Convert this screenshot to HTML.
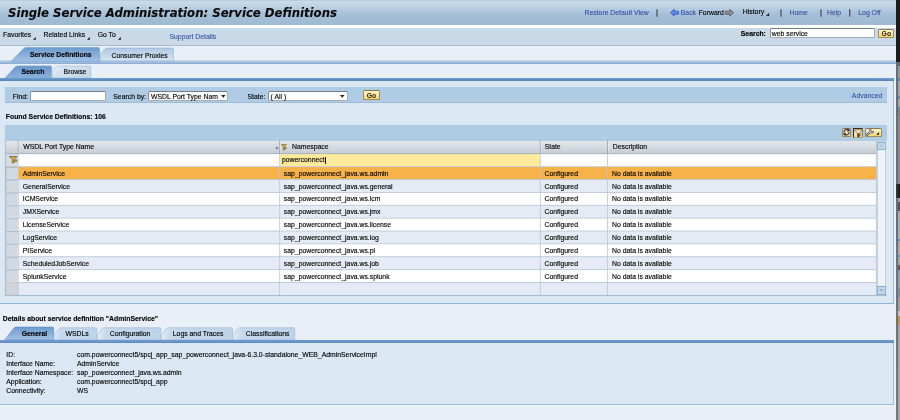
<!DOCTYPE html><html><head><meta charset="utf-8"><title>Single Service Administration: Service Definitions</title><style>
html,body{margin:0;padding:0}
body{width:900px;height:420px;overflow:hidden;position:relative;background:#e8eff6;font-family:"Liberation Sans",Arial,sans-serif;font-size:6.85px;color:#111}
div,span,a{position:absolute;display:block;box-sizing:border-box}
.t{white-space:nowrap;line-height:1;color:#000;-webkit-text-stroke:0.13px currentColor}
.b{font-weight:bold}
.lnk{color:#2a4a9e;-webkit-text-stroke:0.06px currentColor}
a{text-decoration:none}
svg{position:absolute;overflow:visible}
.hdr{background:linear-gradient(#b6c4d2 0,#c9dcec 1.6px,#b7cde1 8px,#a5bed7 15px,#a0bad4 100%)}
.menu{background:#c9d9e7;border-bottom:1px solid #a9bccf}
.tabA{background:linear-gradient(#6f9dd0,#9dbde2)}
.tabI{background:linear-gradient(#eef4fa,#c3d6ea)}
.blueline{background:linear-gradient(#5a86ba,#86abd6)}
.inp{background:#fff;border:0.7px solid #a4aebb;border-top-color:#747c86;border-left-color:#8a929c;border-radius:1.2px}
.btn{background:linear-gradient(#fdf3c6,#fbe79c 55%,#f4d66c);border:0.7px solid #9a8c5c;border-top-color:#857a54;border-radius:1.6px}
.ghead{background:linear-gradient(#e3e7ec,#c6ccd5)}
.sel{background:#d2d8e0;border:0.7px solid #a0afc4;border-right-color:#c2cad6;border-bottom-color:#e6ebf1}
</style></head><body><div id="root" style="left:0;top:0;width:900px;height:420px;overflow:hidden;will-change:transform">
<div class="hdr" style="left:0.00px;top:0.00px;width:896.20px;height:24.80px;"></div>
<div style="left:0.00px;top:24.80px;width:896.20px;height:3.20px;background:#fff"></div>
<span class="t title" style="left:8.00px;top:8.00px;font-size:11.7px;font-family:&quot;DejaVu Sans&quot;,Verdana,sans-serif;font-weight:bold;font-style:italic;color:#0a0a0a;">Single Service Administration: Service Definitions</span>
<a class="t lnk" style="left:584.50px;top:10.00px;">Restore Default View</a>
<svg style="left:669.8px;top:9.2px" width="9" height="7.4" viewBox="0 0 9 7.4"><path d="M4.2 0.3 L0.4 3.7 L4.2 7.1 L4.2 5.2 L8.6 5.2 L8.6 2.2 L4.2 2.2 Z" fill="#5686ee" stroke="#2444a8" stroke-width="0.6" stroke-linejoin="round"/></svg>
<a class="t lnk" style="left:680.80px;top:10.00px;">Back</a>
<span class="t" style="left:698.70px;top:10.00px;">Forward</span>
<svg style="left:725px;top:9.2px" width="9" height="7.4" viewBox="0 0 9 7.4"><path d="M4.8 0.3 L8.6 3.7 L4.8 7.1 L4.8 5.2 L0.4 5.2 L0.4 2.2 L4.8 2.2 Z" fill="#909090" stroke="#484848" stroke-width="0.7" stroke-linejoin="round"/></svg>
<span class="t" style="left:742.80px;top:9.00px;">History</span>
<svg style="left:765.9px;top:12.7px" width="3.1" height="3.1" viewBox="0 0 3 3"><path d="M3 0 L3 3 L0 3 Z" fill="#1a1a3a"/></svg>
<a class="t lnk" style="left:789.60px;top:10.00px;">Home</a>
<a class="t lnk" style="left:827.00px;top:10.00px;">Help</a>
<a class="t lnk" style="left:858.30px;top:10.00px;">Log Off</a>
<svg style="left:0;top:0" width="900" height="30" viewBox="0 0 900 30"><rect x="656.35" y="9.2" width="1.3" height="7.5" fill="#4c5662"/><rect x="780.35" y="9.2" width="1.3" height="7.5" fill="#4c5662"/><rect x="820.35" y="9.2" width="1.3" height="7.5" fill="#4c5662"/><rect x="849.05" y="9.2" width="1.3" height="7.5" fill="#4c5662"/></svg>
<div class="menu" style="left:0.00px;top:28.00px;width:896.20px;height:17.80px;"></div>
<span class="t" style="left:3.00px;top:32.00px;">Favorites</span>
<svg style="left:33.2px;top:36.9px" width="2.8" height="2.8" viewBox="0 0 3 3"><path d="M3 0 L3 3 L0 3 Z" fill="#111"/></svg>
<span class="t" style="left:43.60px;top:32.00px;">Related Links</span>
<svg style="left:87.4px;top:36.9px" width="2.8" height="2.8" viewBox="0 0 3 3"><path d="M3 0 L3 3 L0 3 Z" fill="#111"/></svg>
<span class="t" style="left:97.70px;top:32.00px;">Go To</span>
<svg style="left:118.4px;top:36.9px" width="2.8" height="2.8" viewBox="0 0 3 3"><path d="M3 0 L3 3 L0 3 Z" fill="#111"/></svg>
<a class="t lnk" style="left:169.50px;top:34.00px;">Support Details</a>
<span class="t b" style="left:740.80px;top:31.00px;">Search:</span>
<div class="inp" style="left:769.50px;top:28.40px;width:105.20px;height:9.40px;"></div>
<span class="t" style="left:771.80px;top:31.00px;">web service</span>
<div class="btn" style="left:878.20px;top:28.50px;width:16.20px;height:9.00px;"></div>
<span class="t b" style="left:881.60px;top:31.00px;color:#2c2612;-webkit-text-stroke:0">Go</span>
<div style="left:0.00px;top:45.80px;width:896.20px;height:15.60px;background:#e8eff6"></div>
<div style="left:0.00px;top:63.80px;width:896.20px;height:14.40px;background:#e8eff6"></div>
<svg style="left:0;top:0" width="900" height="420" viewBox="0 0 900 420"><defs><linearGradient id="ga" x1="0" y1="0" x2="0" y2="1"><stop offset="0" stop-color="#6c9bcf"/><stop offset="1" stop-color="#a3c2e5"/></linearGradient><linearGradient id="gb" x1="0" y1="0" x2="0" y2="1"><stop offset="0" stop-color="#6997cc"/><stop offset="1" stop-color="#8db2dd"/></linearGradient><linearGradient id="gi" x1="0" y1="0" x2="0" y2="1"><stop offset="0" stop-color="#afc9e4"/><stop offset="1" stop-color="#d6e4f2"/></linearGradient><linearGradient id="gk" x1="0" y1="0" x2="1" y2="0"><stop offset="0" stop-color="#e2ecf6"/><stop offset="0.14" stop-color="#c6d9ec"/><stop offset="1" stop-color="#bdd3e9"/></linearGradient><linearGradient id="gj" x1="0" y1="0" x2="1" y2="0.4"><stop offset="0" stop-color="#eaf1f8"/><stop offset="0.35" stop-color="#d3e1ef"/><stop offset="1" stop-color="#c6d8ea"/></linearGradient></defs><rect x="0" y="60.7" width="896.2" height="0.8" fill="#93a7be"/><rect x="0" y="61.4" width="896.2" height="2.1" fill="#9ebee4"/><rect x="0" y="63.3" width="896.2" height="0.7" fill="#7d9dc6"/><path d="M10.8 61.6 L23.4 48.8 Q24.6 47.5 26.4 47.5 L98 47.5 Q99.6 47.5 99.6 49.1 L99.6 61.6 Z" fill="url(#ga)" stroke="#6a96c8" stroke-width="0.5"/><path d="M100 60.9 L100 54.2 L105.2 49 Q106 48.1 107.4 48.1 L172.2 48.1 Q173.5 48.1 173.5 49.4 L173.5 60.9 Z" fill="url(#gi)" stroke="#93aecb" stroke-width="0.6"/><path d="M4.8 78.2 L15.2 67 Q16.2 65.9 17.8 65.9 L50.2 65.9 Q51.6 65.9 51.6 67.3 L51.6 78.2 Z" fill="url(#gb)" stroke="#6a96c8" stroke-width="0.5"/><path d="M52 78 L52 71.5 L56.4 67 Q57.2 66.1 58.6 66.1 L89.5 66.1 Q90.8 66.1 90.8 67.4 L90.8 78 Z" fill="url(#gj)" stroke="#a5bcd4" stroke-width="0.6"/></svg>
<span class="t b" style="left:30.00px;top:52.00px;">Service Definitions</span>
<span class="t" style="left:111.50px;top:53.00px;">Consumer Proxies</span>
<span class="t b" style="left:21.50px;top:69.00px;">Search</span>
<span class="t" style="left:63.60px;top:69.00px;">Browse</span>
<div style="left:0.00px;top:78.00px;width:894.10px;height:2.90px;background:linear-gradient(#729ed0,#6592c6 45%,#5a85b7 75%,#5a85b7)"></div>
<div style="left:0.00px;top:80.90px;width:894.10px;height:223.00px;background:#dbe8f4;border-right:0.8px solid #9fbdd9;border-bottom:1px solid #8fb3d4"></div>
<div style="left:5.30px;top:87.20px;width:882.00px;height:15.70px;background:#b0cce4;border-bottom:0.7px solid #9fbbd6"></div>
<span class="t" style="left:12.80px;top:94.00px;">Find:</span>
<div class="inp" style="left:30.20px;top:91.40px;width:76.10px;height:9.60px;"></div>
<span class="t" style="left:113.30px;top:94.00px;">Search by:</span>
<div class="inp" style="left:148.40px;top:91.40px;width:79.60px;height:9.60px;border-radius:1.8px"></div>
<span class="t" style="left:151.00px;top:94.00px;">WSDL Port Type Nam</span>
<svg style="left:221.3px;top:95.2px" width="4.6" height="2.8" viewBox="0 0 4.6 2.8"><path d="M0 0 L4.6 0 L2.3 2.8 Z" fill="#222"/></svg>
<span class="t" style="left:247.50px;top:94.00px;">State:</span>
<div class="inp" style="left:268.30px;top:91.40px;width:79.70px;height:9.60px;border-radius:1.8px"></div>
<span class="t" style="left:270.60px;top:94.00px;">( All )</span>
<svg style="left:340.3px;top:95.2px" width="4.6" height="2.8" viewBox="0 0 4.6 2.8"><path d="M0 0 L4.6 0 L2.3 2.8 Z" fill="#222"/></svg>
<div class="btn" style="left:363.20px;top:90.20px;width:16.50px;height:9.50px;"></div>
<span class="t b" style="left:366.70px;top:93.00px;color:#2c2612;-webkit-text-stroke:0">Go</span>
<a class="t lnk" style="right:17.70px;top:93.00px;">Advanced</a>
<span class="t b" style="left:5.80px;top:114.00px;">Found Service Definitions: 106</span>
<div style="left:5.30px;top:124.50px;width:881.70px;height:16.00px;background:#b0cce4"></div>
<div class="btn" style="left:841.80px;top:127.50px;width:9.60px;height:9.90px;"></div>
<div style="left:853.00px;top:127.60px;width:10.10px;height:10.80px;background:linear-gradient(#fbd88a,#fde8a4);border:1px solid #2c2820;border-right-color:#8a7c58;border-bottom-color:#b0a070;border-radius:1px"></div>
<div class="btn" style="left:865.20px;top:127.60px;width:17.30px;height:9.80px;"></div>
<svg style="left:838px;top:122px" width="50" height="23" viewBox="0 0 900 414"><g fill="none" stroke="#1c2456" stroke-width="19" stroke-linecap="butt"><path d="M108 192 A46 46 0 0 1 176 142"/><path d="M198 176 A46 46 0 0 1 130 226"/></g><path d="M168 114 L222 150 L170 180 Z" fill="#1c2456"/><path d="M138 254 L84 218 L136 188 Z" fill="#1c2456"/><path d="M300 142 L432 142 L386 200 L386 266 L350 266 L350 200 Z" fill="#f6f0dc" stroke="#3a3024" stroke-width="9" stroke-linejoin="round"/><path d="M350 206 L386 206 L386 266 L350 266 Z" fill="#4a4030"/><path d="M396 214 L428 214 M396 240 L418 240" stroke="#3a3024" stroke-width="9"/></svg>
<svg style="left:861px;top:125px" width="30" height="15" viewBox="0 0 840 420"><g fill="none" stroke-linecap="round" stroke-linejoin="round"><path d="M168 272 L252 198 M252 198 L262 128 M252 198 L334 200" stroke="#4e4e62" stroke-width="62"/><path d="M168 272 L252 198 M252 198 L262 128 M252 198 L334 200" stroke="#d8d8e0" stroke-width="24"/></g><path d="M506 198 L506 276 L424 276 Z" fill="#16163a"/></svg>
<div class="ghead" style="left:5.30px;top:140.50px;width:871.00px;height:13.20px;"></div>
<span class="t" style="left:23.30px;top:144.00px;">WSDL Port Type Name</span>
<svg style="left:275px;top:146.1px" width="3.7" height="3" viewBox="0 0 3 2.6"><path d="M0 2.6 L3 2.6 L1.5 0 Z" fill="#7c849a"/></svg>
<svg style="left:280.8px;top:143.9px" width="5.70" height="6.50" viewBox="0 0 126 111" preserveAspectRatio="none"><path d="M6 8 L122 8 L76 50 L76 104 L50 104 L50 50 Z" fill="#dcaa34" stroke="#5c4820" stroke-width="9" stroke-linejoin="round"/><path d="M82 58 L120 58 L120 80 L82 84 Z" fill="#dcaa34" stroke="#5c4820" stroke-width="8" stroke-linejoin="round"/></svg>
<span class="t" style="left:292.00px;top:144.00px;">Namespace</span>
<span class="t" style="left:544.70px;top:144.00px;">State</span>
<span class="t" style="left:612.80px;top:144.00px;">Description</span>
<div style="left:5.30px;top:153.70px;width:871.00px;height:13.00px;background:#fff"></div>
<div style="left:5.30px;top:153.70px;width:12.90px;height:13.00px;background:#d6dce4"></div>
<svg style="left:8.8px;top:156px" width="8.40" height="7.40" viewBox="0 0 126 111" preserveAspectRatio="none"><path d="M6 8 L122 8 L76 50 L76 104 L50 104 L50 50 Z" fill="#e2b23c" stroke="#58421a" stroke-width="9" stroke-linejoin="round"/><path d="M82 58 L120 58 L120 80 L82 84 Z" fill="#e2b23c" stroke="#58421a" stroke-width="8" stroke-linejoin="round"/></svg>
<div style="left:279.70px;top:154.10px;width:260.60px;height:12.40px;background:#fdea9a"></div>
<span class="t" style="left:282.00px;top:157.00px;">powerconnect</span>
<div style="left:325.30px;top:157.40px;width:0.70px;height:6.60px;background:#111"></div>
<svg style="left:0;top:0" width="900" height="420" viewBox="0 0 900 420"><rect x="5.30" y="166.70" width="871.00" height="12.91" fill="#f7b249"/><rect x="5.80" y="167.20" width="12.00" height="11.96" fill="#d2d8e0"/><path d="M5.80 179.16 L5.80 167.20 L17.80 167.20" fill="none" stroke="#98a8be" stroke-width="0.7"/><path d="M6.20 179.16 L17.80 179.16 L17.80 167.60" fill="none" stroke="#e4e9ef" stroke-width="0.7"/><rect x="5.30" y="179.56" width="871.00" height="12.91" fill="#e4ebf5"/><rect x="5.80" y="180.06" width="12.00" height="11.96" fill="#d2d8e0"/><path d="M5.80 192.02 L5.80 180.06 L17.80 180.06" fill="none" stroke="#98a8be" stroke-width="0.7"/><path d="M6.20 192.02 L17.80 192.02 L17.80 180.46" fill="none" stroke="#e4e9ef" stroke-width="0.7"/><rect x="5.30" y="192.42" width="871.00" height="12.91" fill="#fff"/><rect x="5.80" y="192.92" width="12.00" height="11.96" fill="#d2d8e0"/><path d="M5.80 204.88 L5.80 192.92 L17.80 192.92" fill="none" stroke="#98a8be" stroke-width="0.7"/><path d="M6.20 204.88 L17.80 204.88 L17.80 193.32" fill="none" stroke="#e4e9ef" stroke-width="0.7"/><rect x="5.30" y="205.28" width="871.00" height="12.91" fill="#e4ebf5"/><rect x="5.80" y="205.78" width="12.00" height="11.96" fill="#d2d8e0"/><path d="M5.80 217.74 L5.80 205.78 L17.80 205.78" fill="none" stroke="#98a8be" stroke-width="0.7"/><path d="M6.20 217.74 L17.80 217.74 L17.80 206.18" fill="none" stroke="#e4e9ef" stroke-width="0.7"/><rect x="5.30" y="218.14" width="871.00" height="12.91" fill="#fff"/><rect x="5.80" y="218.64" width="12.00" height="11.96" fill="#d2d8e0"/><path d="M5.80 230.60 L5.80 218.64 L17.80 218.64" fill="none" stroke="#98a8be" stroke-width="0.7"/><path d="M6.20 230.60 L17.80 230.60 L17.80 219.04" fill="none" stroke="#e4e9ef" stroke-width="0.7"/><rect x="5.30" y="231.00" width="871.00" height="12.91" fill="#e4ebf5"/><rect x="5.80" y="231.50" width="12.00" height="11.96" fill="#d2d8e0"/><path d="M5.80 243.46 L5.80 231.50 L17.80 231.50" fill="none" stroke="#98a8be" stroke-width="0.7"/><path d="M6.20 243.46 L17.80 243.46 L17.80 231.90" fill="none" stroke="#e4e9ef" stroke-width="0.7"/><rect x="5.30" y="243.86" width="871.00" height="12.91" fill="#fff"/><rect x="5.80" y="244.36" width="12.00" height="11.96" fill="#d2d8e0"/><path d="M5.80 256.32 L5.80 244.36 L17.80 244.36" fill="none" stroke="#98a8be" stroke-width="0.7"/><path d="M6.20 256.32 L17.80 256.32 L17.80 244.76" fill="none" stroke="#e4e9ef" stroke-width="0.7"/><rect x="5.30" y="256.72" width="871.00" height="12.91" fill="#e4ebf5"/><rect x="5.80" y="257.22" width="12.00" height="11.96" fill="#d2d8e0"/><path d="M5.80 269.18 L5.80 257.22 L17.80 257.22" fill="none" stroke="#98a8be" stroke-width="0.7"/><path d="M6.20 269.18 L17.80 269.18 L17.80 257.62" fill="none" stroke="#e4e9ef" stroke-width="0.7"/><rect x="5.30" y="269.58" width="871.00" height="12.91" fill="#fff"/><rect x="5.80" y="270.08" width="12.00" height="11.96" fill="#d2d8e0"/><path d="M5.80 282.04 L5.80 270.08 L17.80 270.08" fill="none" stroke="#98a8be" stroke-width="0.7"/><path d="M6.20 282.04 L17.80 282.04 L17.80 270.48" fill="none" stroke="#e4e9ef" stroke-width="0.7"/><rect x="5.30" y="282.44" width="871.00" height="12.91" fill="#e4ebf5"/><rect x="5.30" y="282.44" width="12.90" height="12.86" fill="#d0d4da"/></svg>
<span class="t" style="left:22.80px;top:171.00px;">AdminService</span>
<span class="t" style="left:283.80px;top:171.00px;">sap_powerconnect_java.ws.admin</span>
<span class="t" style="left:544.50px;top:171.00px;">Configured</span>
<span class="t" style="left:612.00px;top:171.00px;">No data is available</span>
<span class="t" style="left:22.80px;top:184.00px;">GeneralService</span>
<span class="t" style="left:283.80px;top:184.00px;">sap_powerconnect_java.ws.general</span>
<span class="t" style="left:544.50px;top:184.00px;">Configured</span>
<span class="t" style="left:612.00px;top:184.00px;">No data is available</span>
<span class="t" style="left:22.80px;top:196.00px;">ICMService</span>
<span class="t" style="left:283.80px;top:196.00px;">sap_powerconnect_java.ws.icm</span>
<span class="t" style="left:544.50px;top:196.00px;">Configured</span>
<span class="t" style="left:612.00px;top:196.00px;">No data is available</span>
<span class="t" style="left:22.80px;top:209.00px;">JMXService</span>
<span class="t" style="left:283.80px;top:209.00px;">sap_powerconnect_java.ws.jmx</span>
<span class="t" style="left:544.50px;top:209.00px;">Configured</span>
<span class="t" style="left:612.00px;top:209.00px;">No data is available</span>
<span class="t" style="left:22.80px;top:222.00px;">LicenseService</span>
<span class="t" style="left:283.80px;top:222.00px;">sap_powerconnect_java.ws.license</span>
<span class="t" style="left:544.50px;top:222.00px;">Configured</span>
<span class="t" style="left:612.00px;top:222.00px;">No data is available</span>
<span class="t" style="left:22.80px;top:235.00px;">LogService</span>
<span class="t" style="left:283.80px;top:235.00px;">sap_powerconnect_java.ws.log</span>
<span class="t" style="left:544.50px;top:235.00px;">Configured</span>
<span class="t" style="left:612.00px;top:235.00px;">No data is available</span>
<span class="t" style="left:22.80px;top:248.00px;">PIService</span>
<span class="t" style="left:283.80px;top:248.00px;">sap_powerconnect_java.ws.pi</span>
<span class="t" style="left:544.50px;top:248.00px;">Configured</span>
<span class="t" style="left:612.00px;top:248.00px;">No data is available</span>
<span class="t" style="left:22.80px;top:261.00px;">ScheduledJobService</span>
<span class="t" style="left:283.80px;top:261.00px;">sap_powerconnect_java.ws.job</span>
<span class="t" style="left:544.50px;top:261.00px;">Configured</span>
<span class="t" style="left:612.00px;top:261.00px;">No data is available</span>
<span class="t" style="left:22.80px;top:274.00px;">SplunkService</span>
<span class="t" style="left:283.80px;top:274.00px;">sap_powerconnect_java.ws.splunk</span>
<span class="t" style="left:544.50px;top:274.00px;">Configured</span>
<span class="t" style="left:612.00px;top:274.00px;">No data is available</span>
<svg style="left:0;top:0" width="900" height="420" viewBox="0 0 900 420"><rect x="5.30" y="153.30" width="871.00" height="0.80" fill="#a2acb9"/><rect x="5.30" y="166.30" width="871.00" height="0.80" fill="#b7c6d8"/><rect x="5.30" y="179.16" width="871.00" height="0.80" fill="#b7c6d8"/><rect x="5.30" y="192.02" width="871.00" height="0.80" fill="#b7c6d8"/><rect x="5.30" y="204.88" width="871.00" height="0.80" fill="#b7c6d8"/><rect x="5.30" y="217.74" width="871.00" height="0.80" fill="#b7c6d8"/><rect x="5.30" y="230.60" width="871.00" height="0.80" fill="#b7c6d8"/><rect x="5.30" y="243.46" width="871.00" height="0.80" fill="#b7c6d8"/><rect x="5.30" y="256.32" width="871.00" height="0.80" fill="#b7c6d8"/><rect x="5.30" y="269.18" width="871.00" height="0.80" fill="#b7c6d8"/><rect x="5.30" y="282.04" width="871.00" height="0.80" fill="#b7c6d8"/><rect x="5.30" y="294.90" width="871.00" height="0.80" fill="#b7c6d8"/><rect x="17.80" y="153.70" width="0.80" height="141.60" fill="#b9c6d7"/><rect x="17.75" y="140.50" width="0.90" height="13.20" fill="#98a4b5"/><rect x="18.65" y="141.00" width="0.70" height="12.20" fill="rgba(255,255,255,0.5)"/><rect x="279.30" y="153.70" width="0.80" height="141.60" fill="#b9c6d7"/><rect x="279.25" y="140.50" width="0.90" height="13.20" fill="#98a4b5"/><rect x="280.15" y="141.00" width="0.70" height="12.20" fill="rgba(255,255,255,0.5)"/><rect x="539.90" y="153.70" width="0.80" height="141.60" fill="#b9c6d7"/><rect x="539.85" y="140.50" width="0.90" height="13.20" fill="#98a4b5"/><rect x="540.75" y="141.00" width="0.70" height="12.20" fill="rgba(255,255,255,0.5)"/><rect x="607.10" y="153.70" width="0.80" height="141.60" fill="#b9c6d7"/><rect x="607.05" y="140.50" width="0.90" height="13.20" fill="#98a4b5"/><rect x="607.95" y="141.00" width="0.70" height="12.20" fill="rgba(255,255,255,0.5)"/><rect x="4.90" y="140.50" width="0.80" height="154.80" fill="#a9b6c6"/><rect x="875.90" y="140.50" width="0.80" height="154.80" fill="#b4c0d0"/></svg>
<div style="left:877.00px;top:140.50px;width:9.40px;height:154.80px;background:#eef3f8;border:0.6px solid #c4d2e0"></div>
<div style="left:877.20px;top:141.50px;width:8.90px;height:8.30px;background:#bed9ed;border:0.7px solid #93b4cf"></div>
<svg style="left:879.3px;top:144px" width="4.8" height="2.8" viewBox="0 0 4.8 2.8"><path d="M0 2.8 L4.8 2.8 L2.4 0 Z" fill="#b2bcc8"/></svg>
<div style="left:877.10px;top:286.40px;width:8.90px;height:8.20px;background:#bed9ed;border:0.7px solid #8dadc8"></div>
<svg style="left:879.3px;top:289.40px" width="4.8" height="2.8" viewBox="0 0 4.8 2.8"><path d="M0 0 L4.8 0 L2.4 2.8 Z" fill="#a6afbb"/></svg>
<div style="left:5.30px;top:295.00px;width:881.70px;height:0.70px;background:#a9bdd2"></div>
<span class="t b" style="left:2.80px;top:316.00px;">Details about service definition "AdminService"</span>
<svg style="left:0;top:0" width="900" height="420" viewBox="0 0 900 420"><path d="M4.6 339.9 L13.6 328.4 Q14.6 327.1 16.2 327.1 L52.3 327.1 Q53.7 327.1 53.7 328.5 L53.7 339.9 Z" fill="url(#ga)" stroke="#5e8cc2" stroke-width="0.6"/><path d="M54.1 339.7 L54.1 335 L58.9 328.8 Q59.800000000000004 327.7 61.300000000000004 327.7 L95.3 327.7 Q96.7 327.7 96.7 329.1 L96.7 339.7 Z" fill="url(#gk)" stroke="#9cb6d2" stroke-width="0.6"/><path d="M97.1 339.7 L97.1 335 L101.89999999999999 328.8 Q102.8 327.7 104.3 327.7 L159.4 327.7 Q160.8 327.7 160.8 329.1 L160.8 339.7 Z" fill="url(#gk)" stroke="#9cb6d2" stroke-width="0.6"/><path d="M161.2 339.7 L161.2 335 L166.0 328.8 Q166.89999999999998 327.7 168.39999999999998 327.7 L231.1 327.7 Q232.5 327.7 232.5 329.1 L232.5 339.7 Z" fill="url(#gk)" stroke="#9cb6d2" stroke-width="0.6"/><path d="M232.9 339.7 L232.9 335 L237.70000000000002 328.8 Q238.6 327.7 240.1 327.7 L293.3 327.7 Q294.7 327.7 294.7 329.1 L294.7 339.7 Z" fill="url(#gk)" stroke="#9cb6d2" stroke-width="0.6"/></svg>
<span class="t b" style="left:21.70px;top:331.00px;">General</span>
<span class="t" style="left:65.50px;top:331.00px;">WSDLs</span>
<span class="t" style="left:109.70px;top:331.00px;">Configuration</span>
<span class="t" style="left:172.80px;top:331.00px;">Logs and Traces</span>
<span class="t" style="left:245.80px;top:331.00px;">Classifications</span>
<div style="left:0.00px;top:339.60px;width:894.10px;height:3.00px;background:linear-gradient(#6d9bcf,#6a97ca 50%,#5a86b8)"></div>
<div style="left:0.00px;top:342.50px;width:894.10px;height:62.40px;background:#dbe8f4;border-right:0.8px solid #9fbdd9;border-bottom:1px solid #9fbcd8"></div>
<span class="t" style="left:6.30px;top:352.00px;">ID:</span>
<span class="t" style="left:77.00px;top:352.00px;">com.powerconnect5/spcj_app_sap_powerconnect_java-6.3.0-standalone_WEB_AdminServiceImpl</span>
<span class="t" style="left:6.30px;top:361.00px;">Interface Name:</span>
<span class="t" style="left:77.00px;top:361.00px;">AdminService</span>
<span class="t" style="left:6.30px;top:370.00px;">Interface Namespace:</span>
<span class="t" style="left:77.00px;top:370.00px;">sap_powerconnect_java.ws.admin</span>
<span class="t" style="left:6.30px;top:379.00px;">Application:</span>
<span class="t" style="left:77.00px;top:379.00px;">com.powerconnect5/spcj_app</span>
<span class="t" style="left:6.30px;top:388.00px;">Connectivity:</span>
<span class="t" style="left:77.00px;top:388.00px;">WS</span>
<div style="left:896.10px;top:0.00px;width:1.50px;height:420.00px;background:linear-gradient(#1c1c1c 0,#1c1c1c 62px,#6c6c6c 62px,#6c6c6c 184px,#333 184px,#333 198px,#6c6c6c 198px,#787878 100%)"></div>
<div style="left:897.50px;top:0.00px;width:2.50px;height:420.00px;background:linear-gradient(#1c1c1c 0px,#1c1c1c 62px,#5a6470 62px,#5a6470 66px,#8e9aac 66px,#8e9aac 78px,#5f7fb0 78px,#5f7fb0 81px,#97a5b8 81px,#97a5b8 96px,#6a88b4 96px,#6a88b4 99px,#9aa6b6 99px,#9aa6b6 107px,#6a88b4 107px,#6a88b4 110px,#808488 110px,#808488 116px,#878c94 116px,#878c94 184px,#1e1e1e 184px,#1e1e1e 198px,#9aa0a8 198px,#9aa0a8 202px,#50545a 202px,#50545a 211px,#a4acb6 211px,#a4acb6 219px,#9fb0c6 219px,#9fb0c6 239px,#6a88b4 239px,#6a88b4 241px,#a0acba 241px,#a0acba 255px,#6a88b4 255px,#6a88b4 257px,#a0a6ae 257px,#a0a6ae 265px,#5a5e64 265px,#5a5e64 270px,#8a9cb4 270px,#8a9cb4 288px,#7a8ca8 288px,#7a8ca8 298px,#9a9ea4 298px,#9a9ea4 311px,#c4c4c4 311px,#c4c4c4 316px,#c8923c 316px,#c8923c 325px,#a2a6aa 325px,#a2a6aa 420px)"></div>
</div></body></html>
